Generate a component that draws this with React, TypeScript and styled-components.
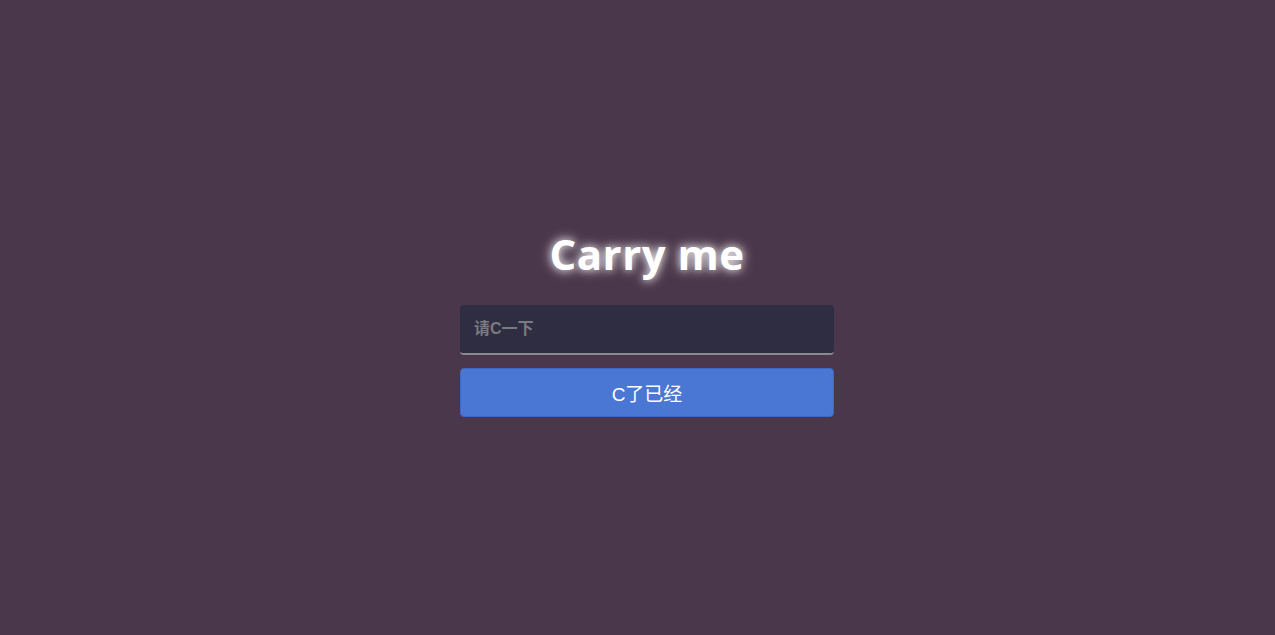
import React, { useState } from "react";
import styled, { createGlobalStyle } from "styled-components";

const GlobalStyle = createGlobalStyle`
  html, body {
    margin: 0;
    padding: 0;
    background: #4b374b;
  }
  * {
    box-sizing: border-box;
  }
`;

const Page = styled.div`
  min-height: 100vh;
  display: flex;
  justify-content: center;
  align-items: flex-start;
  padding: 226px 0 0 19px;
  font-family: "Liberation Sans", "Noto Sans CJK SC", sans-serif;
`;

const LoginBox = styled.form`
  width: 374px;
  display: flex;
  flex-direction: column;
`;

const Title = styled.h1`
  margin: 0 0 23px;
  font-family: "Open Sans", "Noto Sans CJK SC", sans-serif;
  font-size: 42px;
  font-weight: 700;
  line-height: 56px;
  text-align: center;
  color: #fff;
  letter-spacing: 0.5px;
  text-shadow: 0 0 8px rgba(255, 255, 255, 0.9), 0 0 14px rgba(255, 255, 255, 0.5);
`;

const TextInput = styled.input`
  width: 100%;
  height: 50px;
  margin-bottom: 13px;
  padding: 0 14px;
  border: none;
  border-bottom: 2px solid #8a8a8c;
  border-radius: 4px;
  outline: none;
  background: #2f2d41;
  color: #fff;
  font-family: "Liberation Sans", "Noto Sans CJK SC", sans-serif;
  font-size: 16px;
  font-weight: 700;

  &::placeholder {
    color: #7a7a80;
  }
`;

const SubmitButton = styled.button`
  width: 100%;
  height: 49px;
  border: 1px solid #3d67c2;
  border-radius: 4px;
  background: #4a77d4;
  color: #fff;
  font-family: "Liberation Sans", "Noto Sans CJK SC", sans-serif;
  font-size: 19px;
  cursor: pointer;
`;

const App: React.FC = () => {
  const [value, setValue] = useState<string>("");

  return (
    <>
      <GlobalStyle />
      <Page>
        <LoginBox onSubmit={(e) => e.preventDefault()}>
          <Title>Carry me</Title>
          <TextInput
            type="text"
            placeholder="请C一下"
            value={value}
            onChange={(event) => setValue(event.target.value)}
          />
          <SubmitButton type="submit">C了已经</SubmitButton>
        </LoginBox>
      </Page>
    </>
  );
};

export default App;
